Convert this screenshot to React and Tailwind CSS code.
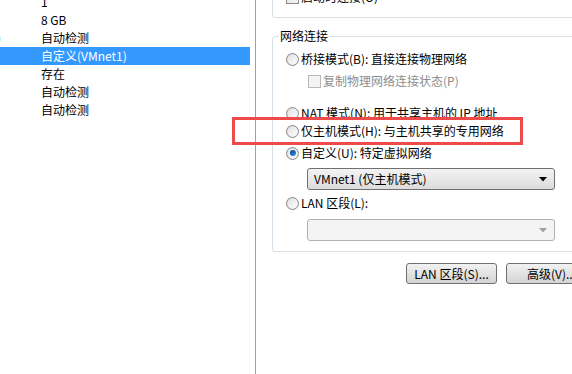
const font = { fontFamily: '"Noto Sans CJK SC", "Liberation Sans", sans-serif' };

const Radio = ({ checked }) => (
  <div className="w-[13px] h-[13px] rounded-full border border-[#8a8a8a] bg-gradient-to-br from-[#d8d8d8] to-[#f8f8f8] flex items-center justify-center shrink-0">
    <div className="w-[9px] h-[9px] rounded-full bg-gradient-to-br from-[#e4e4e4] to-[#fbfbfb] flex items-center justify-center">
      {checked && <div className="w-[6px] h-[6px] rounded-full bg-gradient-to-br from-[#0e3b8a] to-[#2ea0f0]"></div>}
    </div>
  </div>
);

const RadioRow = ({ checked, children, className = '' }) => (
  <div className={`h-[18px] flex items-center gap-[2px] ${className}`}>
    <Radio checked={checked} />
    <span className="text-[12px] leading-none text-black whitespace-nowrap">{children}</span>
  </div>
);

const Arrow = ({ color }) => (
  <svg width="8" height="5" viewBox="0 0 8 5" className="shrink-0">
    <path d="M0 0 L8 0 L4 4.5 Z" fill={color} />
  </svg>
);

const leftRows = [
  { a: '', b: '1' },
  { a: '', b: '8 GB' },
  { a: ')', b: '自动检测' },
  { a: '', b: '自定义(VMnet1)', active: true },
  { a: '', b: '存在' },
  { a: '', b: '自动检测' },
  { a: '', b: '自动检测' },
];

export default function App() {
  return (
    <div className="relative w-[572px] h-[374px] overflow-hidden bg-white flex" style={font}>
      {/* Left list */}
      <div className="w-[256px] h-full shrink-0 border-r border-[#a0a0a0] pr-[5px]">
        <div className="-mt-[7px]">
          {leftRows.map((r, i) => (
            <div
              key={i}
              className={`h-[18px] flex items-center text-[12px] leading-none ${
                r.active ? 'bg-[#3399ff] text-white' : 'text-black'
              }`}
            >
              <span className="w-[44px] -ml-[3px] shrink-0">{r.a}</span>
              <span className="whitespace-nowrap">{r.b}</span>
            </div>
          ))}
        </div>
      </div>

      {/* Right settings */}
      <div className="w-[316px] h-full overflow-hidden pl-[16px] flex flex-col">
        <div className="-mt-[20px] h-[38px] w-[320px] shrink-0 border border-[#d5dfe5] rounded-[3px] pl-[13px] pt-[7px]">
          <div className="h-[18px] flex items-center gap-[2px]">
            <div className="w-[13px] h-[13px] border border-[#8a8a8a] bg-gradient-to-br from-[#dcdcdc] to-[#f8f8f8] shrink-0"></div>
            <span className="text-[12px] leading-none">启动时连接(O)</span>
          </div>
        </div>

        <div className="mt-[18px] w-[320px] shrink-0 border border-[#d5dfe5] rounded-[3px] pl-[13px] pb-[10px]">
          <div className="-mt-[9px] -ml-[7px] w-fit bg-white px-[1px] text-[12px] leading-[16px] h-[16px]">网络连接</div>
          <RadioRow className="mt-[6px]">桥接模式(B): 直接连接物理网络</RadioRow>
          <div className="h-[18px] mt-[4px] ml-[22px] flex items-center gap-[2px]">
            <div className="w-[13px] h-[13px] border border-[#b8b8b8] bg-[#f4f4f4] shrink-0"></div>
            <span className="text-[12px] leading-none text-[#8d8d8d] whitespace-nowrap">复制物理网络连接状态(P)</span>
          </div>
          <RadioRow className="mt-[14px]">NAT 模式(N): 用于共享主机的 IP 地址</RadioRow>
          <RadioRow>仅主机模式(H): 与主机共享的专用网络</RadioRow>
          <RadioRow checked className="mt-[4px]">自定义(U): 特定虚拟网络</RadioRow>
          <div className="mt-[6px] ml-[21px] w-[248px] h-[22px] border border-[#707070] rounded-[3px] bg-gradient-to-b from-[#f3f3f3] to-[#dcdcdc] flex items-center justify-between pl-[6px] pr-[7px]">
            <span className="text-[12px] leading-none whitespace-nowrap">VMnet1 (仅主机模式)</span>
            <Arrow color="#000" />
          </div>
          <RadioRow className="mt-[4px]">LAN 区段(L):</RadioRow>
          <div className="mt-[7px] ml-[21px] w-[248px] h-[22px] border border-[#adb2b5] rounded-[3px] bg-[#f4f4f4] flex items-center justify-end pr-[7px]">
            <Arrow color="#a0a0a0" />
          </div>
        </div>

        <div className="mt-[11px] ml-[134px] flex gap-[9px] shrink-0">
          <button className="w-[91px] h-[21px] shrink-0 whitespace-nowrap px-0 border border-[#707070] rounded-[3px] bg-gradient-to-b from-[#f2f2f2] to-[#d4d4d4] text-[12px] leading-none">
            LAN 区段(S)...
          </button>
          <button className="w-[91px] h-[21px] shrink-0 whitespace-nowrap px-0 border border-[#707070] rounded-[3px] bg-gradient-to-b from-[#f2f2f2] to-[#d4d4d4] text-[12px] leading-none">
            高级(V)...
          </button>
        </div>
      </div>

      {/* Annotation */}
      <div className="absolute left-[232px] top-[117px] w-[291px] h-[28px] border-[3px] border-[#ef4a4a]"></div>
    </div>
  );
}
